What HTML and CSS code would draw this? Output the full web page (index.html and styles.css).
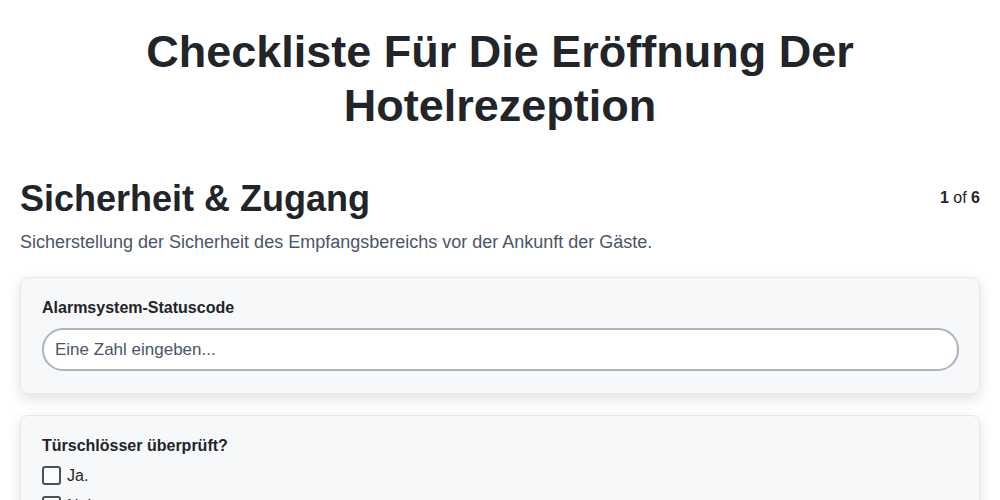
FILE: index.html
```html
<!DOCTYPE html>
<html lang="de">
<head>
    <meta charset="UTF-8" />
    <meta name="viewport" content="width=device-width, initial-scale=1.0" />
    <title>Checkliste Für Die Eröffnung Der Hotelrezeption</title>
    <link rel="stylesheet" href="styles.css">
</head>
<body>

    <div class="container">
        <h1>Checkliste Für Die Eröffnung Der Hotelrezeption</h1>

        <div class="section-head">
            <h2>Sicherheit &amp; Zugang</h2>
            <span class="step"><b>1</b> of <b>6</b></span>
        </div>
        <p class="section-desc">Sicherstellung der Sicherheit des Empfangsbereichs vor der Ankunft der Gäste.</p>

        <div class="card">
            <label class="field-label" for="alarm-code">Alarmsystem-Statuscode</label>
            <input type="text" id="alarm-code" class="text-input" placeholder="Eine Zahl eingeben...">
        </div>

        <div class="card">
            <div class="field-label">Türschlösser überprüft?</div>
            <label class="option"><input type="checkbox"> <span>Ja.</span></label>
            <label class="option"><input type="checkbox"> <span>Nein</span></label>
        </div>
    </div>

</body>
</html>
```

FILE: styles.css
```css
/* Global styles */
body {
    font-family: "Liberation Sans", Arial, sans-serif;
    background-color: #fff;
    color: #212529;
    margin: 0;
    padding: 0;
}

.container {
    padding: 25px 20px 20px;
}

h1 {
    text-align: center;
    font-size: 45px;
    line-height: 1.2;
    font-weight: bold;
    margin: 0 auto 44px;
    max-width: 760px;
}

.section-head {
    display: flex;
    justify-content: space-between;
    align-items: flex-start;
}

h2 {
    margin: 0;
    font-size: 36px;
    line-height: 1.2;
    font-weight: bold;
}

.step {
    font-size: 16px;
    margin-top: 12px;
    color: #212529;
}

.section-desc {
    margin: 12px 0 24px;
    font-size: 18px;
    color: #4a5568;
}

/* Cards */
.card {
    background-color: #f7f8fa;
    border: 1px solid #e5e7eb;
    border-radius: 8px;
    box-shadow: 0 5px 14px rgba(0, 0, 0, 0.12);
    padding: 21px 20px 22px 21px;
    margin-bottom: 21px;
}

.field-label {
    display: block;
    font-size: 16px;
    font-weight: bold;
    margin-bottom: 11px;
}

.text-input {
    display: block;
    width: 100%;
    box-sizing: border-box;
    height: 43px;
    padding: 0 11px;
    font-family: inherit;
    font-size: 17px;
    color: #212529;
    background: #fff;
    border: 2px solid #adb3bb;
    border-radius: 21px;
    outline: none;
}

.text-input::placeholder {
    color: #4a5568;
}

.option {
    display: flex;
    align-items: center;
    gap: 6px;
    font-size: 16px;
    height: 19px;
    margin-bottom: 11px;
}

.option input {
    appearance: none;
    width: 19px;
    height: 19px;
    margin: 0;
    border: 2px solid #4a5060;
    border-radius: 3px;
    background: #fff;
}
```
